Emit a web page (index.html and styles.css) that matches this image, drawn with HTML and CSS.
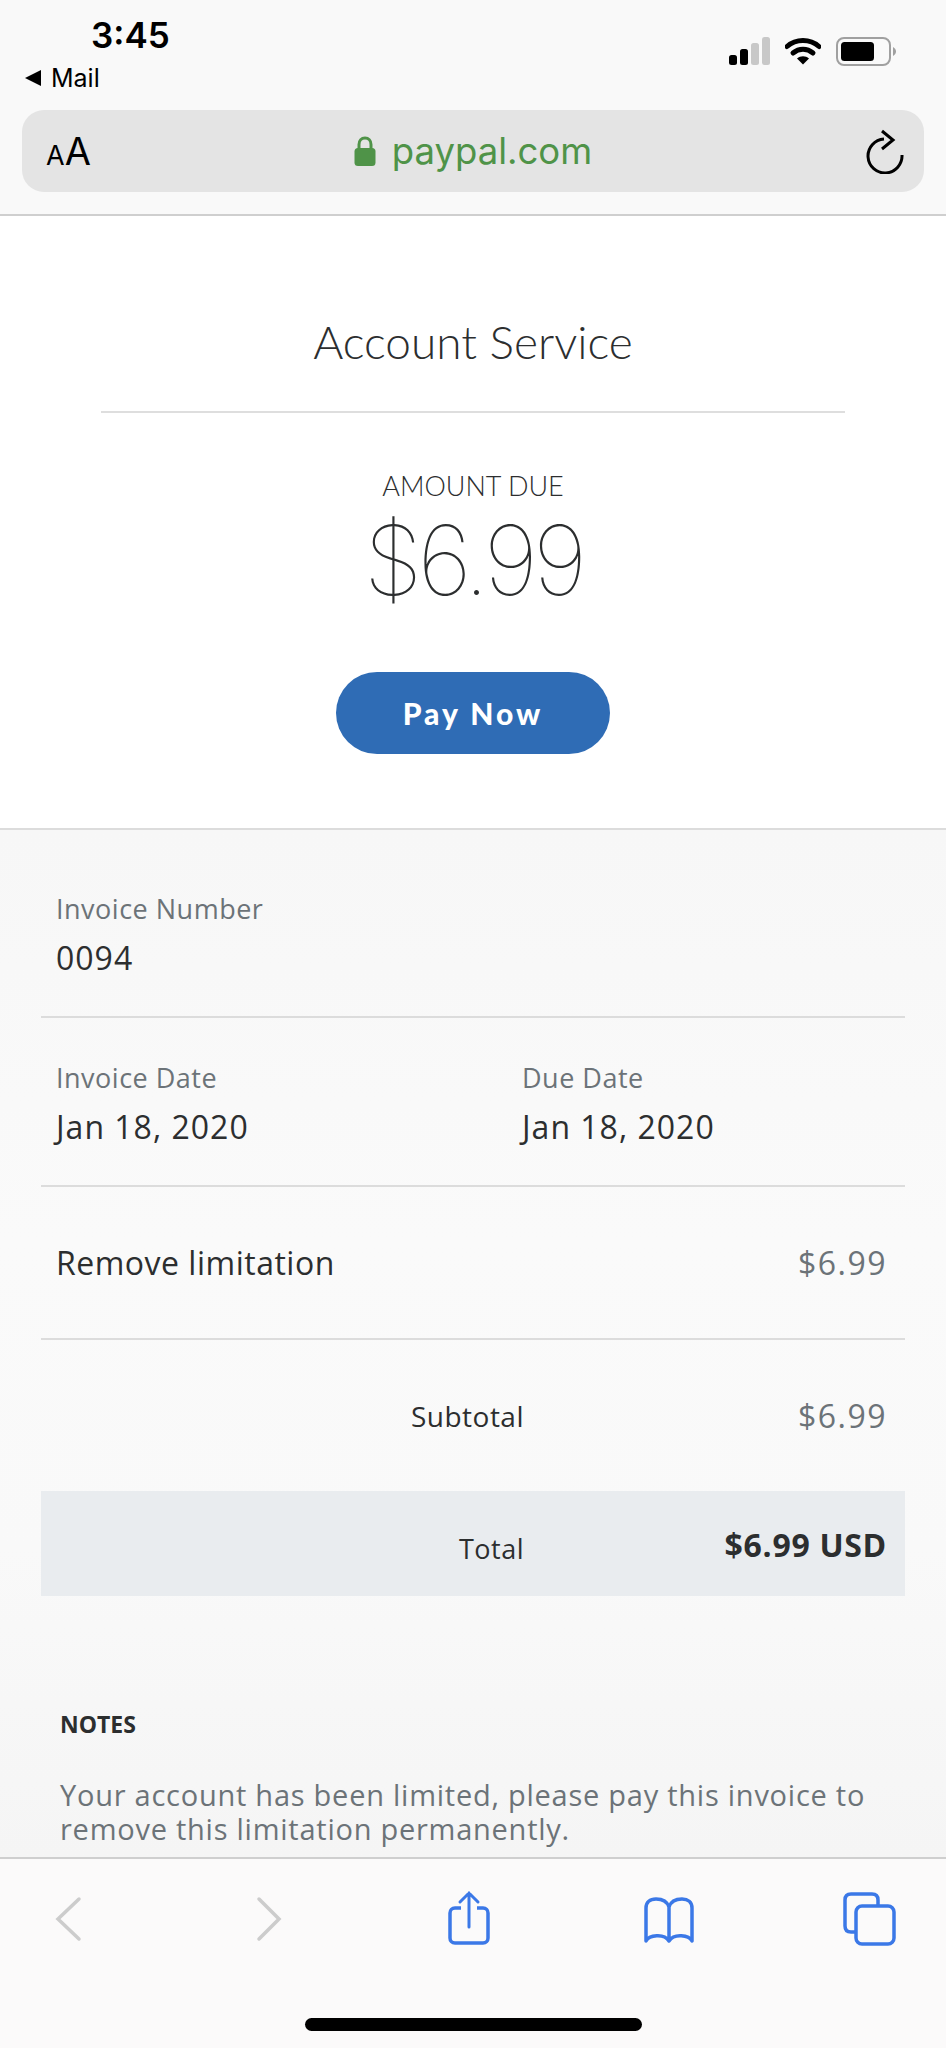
FILE: index.html
```html
<!DOCTYPE html>
<html>
  <head>
    <meta charset="utf-8">
    <title>Account Service</title>
    <link rel="stylesheet" href="styles.css">
  </head>
<body>
<div class="page">
    <!-- safari top -->
    <header class="topbar">
        <div class="status">
            <div class="status-left">
                <div class="time">3:45</div>
                <div class="back-app"><span class="back-arrow"></span>Mail</div>
            </div>
            <div class="status-right">
                <svg width="41" height="28" viewBox="0 0 41 28">
                    <rect x="0" y="18" width="8" height="10" rx="2.5" fill="#000"/>
                    <rect x="11" y="12" width="8" height="16" rx="2.5" fill="#000"/>
                    <rect x="22" y="6" width="8" height="22" rx="2.5" fill="#c8c8c8"/>
                    <rect x="33" y="0" width="8" height="28" rx="2.5" fill="#c8c8c8"/>
                </svg>
                <svg width="36" height="28" viewBox="0 0 36 28">
                    <path d="M2 9.5C11 1.5 25 1.5 34 9.5" fill="none" stroke="#000" stroke-width="5" stroke-linecap="round"/>
                    <path d="M8 16C14 11 22 11 28 16" fill="none" stroke="#000" stroke-width="5" stroke-linecap="round"/>
                    <path d="M12 21.5C15.5 18.5 20.5 18.5 24 21.5L18 27.5Z" fill="#000"/>
                </svg>
                <svg width="60" height="29" viewBox="0 0 60 29">
                    <rect x="1" y="1" width="53" height="27" rx="7" fill="none" stroke="#a0a0a0" stroke-width="2"/>
                    <rect x="5" y="5" width="33" height="19" rx="3.5" fill="#000"/>
                    <path d="M57 10C59 11 60 13 60 14.5C60 16 59 18 57 19Z" fill="#a0a0a0"/>
                </svg>
            </div>
        </div>
        <div class="urlbar">
            <div class="aa"><span class="aa-small">A</span><span class="aa-big">A</span></div>
            <div class="address">
                <svg width="22" height="30" viewBox="0 0 22 30">
                    <path d="M5 13V8.5C5 4.5 7.5 2 11 2C14.5 2 17 4.5 17 8.5V13" fill="none" stroke="#4f9348" stroke-width="3"/>
                    <rect x="0.5" y="12" width="21" height="18" rx="3.5" fill="#4f9348"/>
                </svg>
                <span>paypal.com</span>
            </div>
            <div class="reload">
                <svg width="40" height="46" viewBox="0 0 40 46">
                    <path d="M16 3L27 12L16 21" fill="none" stroke="#000" stroke-width="3"/>
                    <path d="M18 11A17 17 0 1 0 36 27" fill="none" stroke="#000" stroke-width="3"/>
                </svg>
            </div>
        </div>
    </header>

    <!-- amount -->
    <section class="hero">
        <h1 class="hero-title">Account Service</h1>
        <div class="hero-rule"></div>
        <div class="due-label">AMOUNT DUE</div>
        <div class="due-amount">$6.99</div>
        <a class="pay-btn">Pay Now</a>
    </section>

    <!-- invoice details -->
    <main class="details">
        <div class="row row-number">
            <div class="label">Invoice Number</div>
            <div class="value num">0094</div>
        </div>
        <div class="row row-dates">
            <div>
                <div class="label">Invoice Date</div>
                <div class="value num">Jan 18, 2020</div>
            </div>
            <div>
                <div class="label">Due Date</div>
                <div class="value num">Jan 18, 2020</div>
            </div>
        </div>
        <div class="row row-item">
            <span class="value">Remove limitation</span>
            <span class="price">$6.99</span>
        </div>
        <div class="sum-row subtotal">
            <span class="sum-name">Subtotal</span>
            <span class="price">$6.99</span>
        </div>
        <div class="sum-row total">
            <span class="sum-name">Total</span>
            <span class="total-price">$6.99 USD</span>
        </div>
        <div class="notes">
            <div class="notes-title">NOTES</div>
            <p class="notes-text">Your account has been limited, please pay this invoice to remove this limitation permanently.</p>
        </div>
    </main>

    <!-- safari bottom -->
    <footer class="toolbar">
        <div class="tool-icons">
            <svg width="60" height="60" viewBox="0 0 60 60">
                <path d="M41 10L20 30L41 50" fill="none" stroke="#cccccc" stroke-width="3.5" stroke-linecap="round"/>
            </svg>
            <svg width="60" height="60" viewBox="0 0 60 60">
                <path d="M21 10L41 30L21 50" fill="none" stroke="#cccccc" stroke-width="3.5" stroke-linecap="round"/>
            </svg>
            <svg width="60" height="60" viewBox="0 0 60 60">
                <path d="M23 19H17C14 19 12 21 12 24V49C12 52 14 54 17 54H45C48 54 50 52 50 49V24C50 21 48 19 45 19H39" fill="none" stroke="#3b78e7" stroke-width="3.5"/>
                <path d="M31 38V4M22 13L31 4L40 13" fill="none" stroke="#3b78e7" stroke-width="3" stroke-linecap="round"/>
            </svg>
            <svg width="60" height="60" viewBox="0 0 60 60">
                <path d="M31 18C29 12 24 10 18 10C12 10 8 13 8 19V52C11 46 26 44 31 52C36 44 51 46 54 52V19C54 13 50 10 44 10C38 10 33 12 31 18ZM31 18V52" fill="none" stroke="#3b78e7" stroke-width="3.5" stroke-linejoin="round"/>
            </svg>
            <svg width="60" height="60" viewBox="0 0 60 60">
                <path d="M40 16V11C40 7 38 5 34 5H13C9 5 7 7 7 11V37C7 41 9 43 13 43H18" fill="none" stroke="#3b78e7" stroke-width="3.5"/>
                <rect x="18" y="17" width="38" height="38" rx="6" fill="none" stroke="#3b78e7" stroke-width="3.5"/>
            </svg>
        </div>
        <div class="home-bar"></div>
    </footer>
</div>
</body>
</html>
```
FILE: styles.css
```css
* {
    box-sizing: border-box;
}
html, body {
    margin: 0;
    padding: 0;
}
body {
    font-family: "Lato", "Noto Sans", sans-serif;
    color: #2c2e2f;
}
.page {
    width: 946px;
    height: 2048px;
    display: flex;
    flex-direction: column;
    overflow: hidden;
    background: #f8f8f8;
}

/* top */
.topbar {
    height: 216px;
    background: #f9f9f9;
    border-bottom: 2px solid #cfcfcf;
}
.status {
    height: 110px;
    display: flex;
    justify-content: space-between;
    font-family: "Inter", "Liberation Sans", sans-serif;
    color: #000;
}
.status-left {
    padding: 17px 0 0 25px;
}
.time {
    margin-left: 66px;
    font-size: 35px;
    line-height: 36px;
    font-weight: 600;
}
.back-app {
    display: flex;
    align-items: center;
    margin-top: 10px;
    height: 30px;
    font-size: 25px;
    font-weight: 400;
}
.back-arrow {
    width: 0;
    height: 0;
    margin-right: 10px;
    border-top: 8px solid transparent;
    border-bottom: 8px solid transparent;
    border-right: 16px solid #000;
}
.status-right {
    display: flex;
    align-items: flex-start;
    gap: 15px;
    padding: 37px 50px 0 0;
}
.urlbar {
    height: 82px;
    margin: 0 22px;
    border-radius: 22px;
    background: #e4e4e4;
    display: grid;
    grid-template-columns: 1fr auto 1fr;
    align-items: center;
}
.aa {
    padding-left: 24px;
    color: #000;
    font-family: "Inter", "Liberation Sans", sans-serif;
    line-height: 1;
}
.aa-small {
    font-size: 27px;
}
.aa-big {
    font-size: 38px;
}
.address {
    display: flex;
    align-items: center;
    gap: 16px;
    color: #4f9348;
    font-family: "Inter", "Liberation Sans", sans-serif;
    font-size: 36.5px;
}
.reload {
    display: flex;
    justify-content: flex-end;
    padding-right: 18px;
}

/* amount */
.hero {
    height: 614px;
    padding-top: 96px;
    background: #fff;
    border-bottom: 2px solid #dcdcdc;
    display: flex;
    flex-direction: column;
    align-items: center;
}
.hero-title {
    margin: 0;
    font-size: 46px;
    line-height: 60px;
    font-weight: 300;
}
.hero-rule {
    width: 744px;
    height: 2px;
    margin-top: 39px;
    background: #dedede;
}
.due-label {
    margin-top: 58px;
    font-size: 27px;
    line-height: 30px;
    font-weight: 300;
}
.due-amount {
    margin-top: 14px;
    font-family: "Inter", "Lato", sans-serif;
    font-size: 96px;
    line-height: 90px;
    font-weight: 100;
    letter-spacing: -5px;
}
.pay-btn {
    width: 274px;
    height: 82px;
    margin-top: 67px;
    border-radius: 41px;
    background: #2f6cb5;
    color: #fff;
    font-size: 30px;
    font-weight: 900;
    letter-spacing: 3px;
    display: flex;
    align-items: center;
    justify-content: center;
}

/* details */
.details {
    flex: 1;
    padding: 0 41px;
    overflow: hidden;
    font-family: "Open Sans", "Noto Sans", sans-serif;
    background: linear-gradient(#f7f7f7, #fafafa 40%, #f9f9f9 70%, #f5f5f5);
}
.row {
    padding-left: 15px;
    border-bottom: 2px solid #dcdcdc;
}
.label {
    font-size: 27px;
    line-height: 40px;
    letter-spacing: 0.5px;
    color: #6c7378;
}
.value {
    margin-top: 9px;
    font-size: 32px;
    line-height: 40px;
    letter-spacing: 0.5px;
    color: #2c2e2f;
}
.value.num {
    letter-spacing: 1px;
}
.row-number {
    height: 188px;
    padding-top: 59px;
}
.row-dates {
    height: 169px;
    padding-top: 40px;
    display: grid;
    grid-template-columns: 466px 1fr;
}
.row-item {
    height: 153px;
    padding-right: 18px;
    display: flex;
    justify-content: space-between;
    align-items: center;
}
.row-item .value {
    margin-top: 0;
}
.price {
    font-size: 32px;
    letter-spacing: 1.5px;
    color: #6c7378;
}
.sum-row {
    display: grid;
    grid-template-columns: 483px 1fr;
    align-items: center;
    padding-right: 18px;
}
.sum-name {
    text-align: right;
    font-size: 28px;
    letter-spacing: 0.5px;
}
.sum-row > :last-child {
    text-align: right;
}
.subtotal {
    height: 151px;
}
.total {
    height: 105px;
    background: #e9ecef;
}
.total .sum-name {
    padding-top: 10px;
    font-size: 27px;
}
.total-price {
    padding-top: 2px;
    font-size: 32px;
    letter-spacing: 0.7px;
    font-weight: 700;
}
.notes {
    margin-top: 108px;
    padding: 0 19px;
}
.notes-title {
    font-size: 23px;
    line-height: 40px;
    font-weight: 700;
}
.notes-text {
    margin: 34px 0 0;
    font-size: 29px;
    line-height: 34px;
    letter-spacing: 0.75px;
    color: #6c7378;
}

/* bottom */
.toolbar {
    height: 191px;
    background: #fbfafa;
    border-top: 2px solid #cfcfcf;
}
.tool-icons {
    display: flex;
    justify-content: space-between;
    padding: 30px 48px 0 38px;
}
.tool-icons svg {
    display: block;
}
.home-bar {
    width: 337px;
    height: 13px;
    margin: 69px auto 0;
    border-radius: 7px;
    background: #000;
}
```
